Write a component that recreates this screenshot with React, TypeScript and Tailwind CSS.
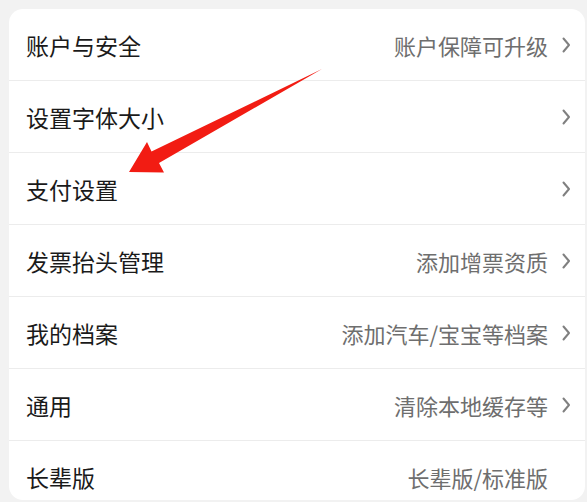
import React from "react";

const rows: { label: string; value?: string; chevron: boolean }[] = [
  { label: "账户与安全", value: "账户保障可升级", chevron: true },
  { label: "设置字体大小", chevron: true },
  { label: "支付设置", chevron: true },
  { label: "发票抬头管理", value: "添加增票资质", chevron: true },
  { label: "我的档案", value: "添加汽车/宝宝等档案", chevron: true },
  { label: "通用", value: "清除本地缓存等", chevron: true },
  { label: "长辈版", value: "长辈版/标准版", chevron: false },
];

function Chevron({ hidden }: { hidden?: boolean }) {
  return (
    <svg
      width="9"
      height="16"
      viewBox="0 0 9 16"
      className={hidden ? "invisible shrink-0" : "shrink-0"}
    >
      <path d="M1.5 1.5 L7 8 L1.5 14.5" fill="none" stroke="#808080" strokeWidth="2" strokeLinecap="round" strokeLinejoin="round" />
    </svg>
  );
}

export default function App() {
  return (
    <div
      className="relative w-[587px] h-[502px] overflow-hidden bg-[#f2f2f2] pl-[9px] pr-[2px] pt-[9px]"
      style={{ fontFamily: '"Noto Sans CJK SC", "Noto Sans", sans-serif' }}
    >
      <div className="h-[491px] overflow-hidden rounded-[14px] bg-white">
        {rows.map((r, i) => (
          <div
            key={i}
            className="flex h-[72px] items-center border-b border-[#ececec] pl-[17px] pr-[14px]"
          >
            <span className="flex-1 text-[23px] leading-none text-[#1a1a1a] pt-[1px]">{r.label}</span>
            {r.value && (
              <span className="text-[22px] leading-none text-[#6e6e6e] pt-[1px]">{r.value}</span>
            )}
            <div className="ml-[14px] flex items-center">
              <Chevron hidden={!r.chevron} />
            </div>
          </div>
        ))}
      </div>
      <svg
        className="pointer-events-none absolute left-0 top-0"
        width="587"
        height="502"
        viewBox="0 0 587 502"
      >
        <polygon
          points="322,69 159,163 164,172.5 129,172 147,142 151.5,151.5"
          fill="#f21c13"
        />
      </svg>
    </div>
  );
}
